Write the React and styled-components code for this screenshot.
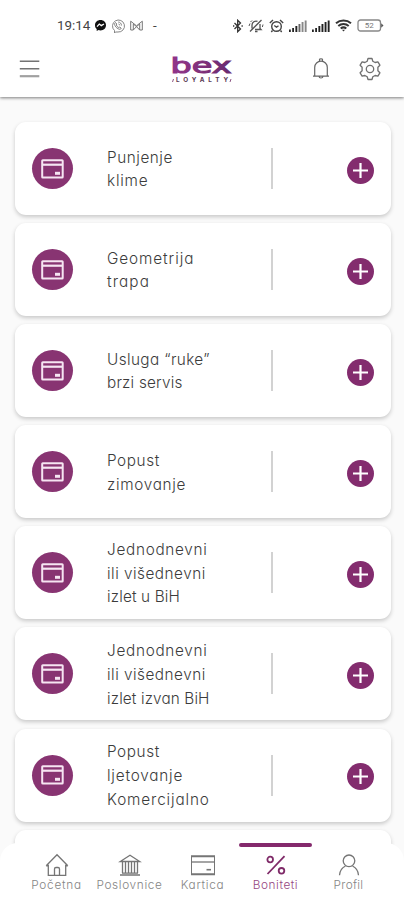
import React from 'react';
import styled, { createGlobalStyle } from 'styled-components';

const GlobalStyle = createGlobalStyle`
  * {
    box-sizing: border-box;
  }

  body {
    margin: 0;
    background: #fafafa;
    font-family: Inter, 'Open Sans', sans-serif;
    font-feature-settings: 'cv11';
  }
`;

const Screen = styled.div`
  display: flex;
  flex-direction: column;
  width: 404px;
  height: 900px;
  overflow: hidden;
  background: #fafafa;
`;

const Header = styled.header`
  flex: none;
  height: 97px;
  background: #fff;
  box-shadow: 0 1px 3px rgba(0, 0, 0, 0.5);
  z-index: 1;
`;

const StatusBar = styled.div`
  display: flex;
  align-items: center;
  justify-content: space-between;
  height: 40px;
  padding: 11px 20px 0 57px;
`;

const StatusGroup = styled.div`
  display: flex;
  align-items: center;
  gap: ${props => props.$gap}px;
`;

const Clock = styled.span`
  width: 33px;
  font: 400 13.4px Roboto, sans-serif;
  color: #444;
  white-space: nowrap;
`;

const Dash = styled(Clock)`
  width: 8px;
  margin-left: 5px;
`;

const AppBar = styled.div`
  display: grid;
  grid-template-columns: 22px 1fr 20px 24px;
  align-items: center;
  height: 57px;
  padding: 0 22px 0 19px;

  > :nth-child(2) {
    justify-self: start;
    margin-left: 130px;
  }

  > :nth-child(3) {
    margin-left: -26.5px;
  }
`;

const List = styled.main`
  flex: 1;
  min-height: 0;
  overflow: hidden;
  display: flex;
  flex-direction: column;
  gap: 8.1px;
  padding: 25px 13px 0 15px;
`;

const Card = styled.article`
  flex: none;
  display: grid;
  grid-template-columns: 92px 164px 1fr 28px;
  align-items: center;
  height: 93px;
  padding: 0 16px 0 0;
  border-radius: 11px;
  background: #fff;
  box-shadow: 0 2px 4px rgba(0, 0, 0, 0.2);
`;

const Badge = styled.div`
  display: flex;
  align-items: center;
  justify-content: center;
  width: 41px;
  height: 41px;
  margin-left: 16.5px;
  border-radius: 50%;
  background: #883472;
`;

const Title = styled.div`
  padding-top: 1.5px;
  font-size: 15.3px;
  font-weight: 300;
  line-height: 23.7px;
  color: #3c3c3c;
  white-space: nowrap;
`;

const Line = styled.div`
  letter-spacing: ${props => props.$spacing}px;
`;

const Divider = styled.div`
  width: 1.5px;
  height: 41px;
  background: #d2d2d2;
`;

const PlusButton = styled.button`
  display: flex;
  align-items: center;
  justify-content: center;
  width: 27px;
  height: 27px;
  margin-top: 3px;
  padding: 0;
  border: 0;
  border-radius: 50%;
  background: #832c6e;
`;

const TabBar = styled.nav`
  flex: none;
  display: grid;
  grid-template-columns: 73px 73px 73px 73px 73px;
  height: 57px;
  padding-left: 20px;
  margin-top: -16px;
  border-radius: 18px 18px 0 0;
  background: #fff;
  z-index: 1;
`;

const Tab = styled.div`
  display: flex;
  flex-direction: column;
  align-items: center;
  color: ${props => (props.$active ? '#96467f' : '#858585')};

  &::before {
    content: '';
    width: 73px;
    height: 3.5px;
    margin-bottom: 6.5px;
    border-radius: 2px;
    background: ${props => (props.$active ? '#84296c' : 'transparent')};
  }
`;

const TabLabel = styled.span`
  font-size: 11.8px;
  line-height: 16px;
  font-weight: 300;
  letter-spacing: ${props => props.$spacing}px;
  white-space: nowrap;
`;

/* status bar icons */

const Messenger = () => (
  <svg width="11" height="11" viewBox="0 0 11 11">
    <path d="M5.5 0C2.3 0 0 2.2 0 5.2c0 1.600.6 2.900 1.700 3.800V11l1.800-.9c.6.2 1.300.3 2 .3C8.700 10.400 11 8.200 11 5.200S8.700 0 5.500 0z" fill="#111" />
    <path d="M2 6.600l2.300-2.500 2 1.500L9 4" fill="none" stroke="#fff" strokeWidth="1.300" />
  </svg>
);

const Viber = () => (
  <svg width="14" height="14" viewBox="0 0 14 14" fill="none" stroke="#777" strokeWidth="0.9">
    <path d="M3.500 11.500A6 6 0 1 1 7 13H4.800L3.500 14z" />
    <path d="M4.500 3.500L5.800 5l-.5 1c.5 1.200 1.200 2 2.500 2.600l1-.6 1.400 1.200c-.5 1.500-1.700 1.300-3 .6-2-1-3.300-2.600-3.600-4.500 0-.8.300-1.400.9-1.800zM7.200 3c2 .2 3.200 1.500 3.300 3.500M7.500 5c.9.1 1.200.6 1.300 1.400" />
  </svg>
);

const Mail = () => (
  <svg width="13" height="11" viewBox="0 0 13 11" fill="none" stroke="#777" strokeWidth="1">
    <path d="M.7 10V1.200l5.800 4.600 5.800-4.600V10H9.700V4L6.500 6.600 3.300 4v6zM3.300 10l3.200-3.400L9.700 10" />
  </svg>
);

const Bluetooth = () => (
  <svg width="10" height="14" viewBox="0 0 10 14" fill="none" stroke="#333" strokeWidth="1.300">
    <path d="M1.500 4l6 6L4.700 12.700V1.300L7.500 4l-6 6" />
    <path d="M0 7h1.300M8.500 7h1.300" />
  </svg>
);

const MutedBell = () => (
  <svg width="16" height="14" viewBox="0 0 16 14" fill="none" stroke="#555" strokeWidth="1.300">
    <path d="M2 12.500L13.500 1M4 9.500V6a4 4 0 0 1 5.500-3.600M12 5v4.500l1 1H7M7 12.500h2.500" />
    <path d="M1 7l1-2.500M15 5.500l-.6 2.500M2.500 3L4 1.500" strokeWidth="1" />
  </svg>
);

const Alarm = () => (
  <svg width="15" height="14" viewBox="0 0 15 14" fill="none" stroke="#444" strokeWidth="1.400">
    <circle cx="7.500" cy="7.500" r="4.800" />
    <path d="M.8 4L4 1M14.200 4L11 1M3.500 11.500L2.300 13M11.500 11.500l1.200 1.500M5.300 6.500l2.200 1.700 2-1.500" />
  </svg>
);

const Signal = ({ faded }) => (
  <svg width="18" height="12" viewBox="0 0 18 12" fill="#222">
    <rect x="0" y="9.500" width="1.800" height="2.500" />
    <rect x="3.200" y="8" width="1.800" height="4" />
    <rect x="6.400" y="6" width="1.900" height="6" />
    <rect x="9.500" y="4" width="1.900" height="8" fill={faded ? '#666' : '#222'} />
    <rect x="12.600" y="2" width="1.900" height="10" fill={faded ? '#888' : '#222'} />
    <rect x="15.700" y="0.500" width="1.900" height="11.500" fill={faded ? '#888' : '#222'} />
  </svg>
);

const Wifi = () => (
  <svg width="17" height="13" viewBox="0 0 17 13" fill="none" stroke="#333" strokeWidth="2">
    <path d="M1 4.300c4.200-3.600 10.800-3.600 15 0M3.300 7c3-2.600 7.400-2.600 10.400 0M5.700 9.500c1.600-1.300 4-1.300 5.600 0" />
    <path d="M7 10.800h3l-1.500 1.700z" fill="#333" stroke="none" />
  </svg>
);

const Battery = () => (
  <svg width="27" height="13" viewBox="0 0 27 13">
    <rect x="1" y="1" width="22.500" height="11" rx="2.500" fill="#fff" stroke="#888" strokeWidth="1.300" />
    <path d="M24.200 4.200l2.300 2.300-2.300 2.300z" fill="#555" />
    <text x="12.200" y="9.400" fontSize="8" textAnchor="middle" fill="#777" fontFamily="Roboto, sans-serif">52</text>
  </svg>
);

/* app bar icons */

const Menu = () => (
  <svg width="22" height="20" viewBox="0 0 22 20">
    <path d="M.8 2.200h19.500M.8 9.700h19.500" stroke="#737373" strokeWidth="1.600" />
    <path d="M.8 17.200h19.500" stroke="#a0a0a0" strokeWidth="2.200" />
  </svg>
);

const Logo = () => (
  <svg width="62" height="36" viewBox="0 0 62 36">
    <defs>
      <linearGradient id="bex" x1="0" y1="0" x2="1" y2="0">
        <stop offset="0" stopColor="#92358b" />
        <stop offset="0.5" stopColor="#80307a" />
        <stop offset="1" stopColor="#682a70" />
      </linearGradient>
    </defs>
    <text x="-0.500" y="22" fontFamily="'DejaVu Sans', sans-serif" fontSize="21.500" textLength="61" lengthAdjust="spacingAndGlyphs" fill="url(#bex)" stroke="url(#bex)" strokeWidth="1.100">bex</text>
    <text x="5" y="31.300" fontFamily="Inter, sans-serif" fontWeight="700" fontSize="6.300" textLength="52" fill="#5a3853">LOYALTY</text>
    <path d="M1.500 31l1-3M59 31l1-3" stroke="#8d5583" strokeWidth="1" />
  </svg>
);

const Bell = () => (
  <svg width="18" height="22" viewBox="0 0 18 22" fill="none" stroke="#666" strokeWidth="1.200">
    <path d="M1 18.200h16M2.700 18V9.500a6.300 6.300 0 0 1 12.600 0V18M7.500 3V1.500c0-.8 3-.8 3 0V3M7 18.500c.3 2 3.700 2 4 0" />
  </svg>
);

const Gear = () => (
  <svg width="24" height="24" viewBox="0 0 24 24" fill="none" stroke="#707070" strokeWidth="1.300" strokeLinejoin="round">
    <path d="M9.200 4.200L10 1.500h4l.8 2.700 2.300 1.300 2.800-.7 2 3.400-2 2v3.600l2 2-2 3.400-2.800-.7-2.300 1.300-.8 2.700h-4l-.8-2.700-2.300-1.300-2.800.7-2-3.400 2-2v-3.600l-2-2 2-3.400 2.800.7z" />
    <circle cx="12" cy="12" r="3.700" />
  </svg>
);

/* card icons */

const CardIcon = () => (
  <svg width="23" height="20" viewBox="0 0 23 20" fill="none" stroke="#f6e5f2">
    <rect x="1.200" y="1.200" width="20.500" height="17.300" rx="0.600" strokeWidth="2" />
    <path d="M1 5.700h21" strokeWidth="2.200" />
    <path d="M14 14.300h5" strokeWidth="3" />
  </svg>
);

const Plus = () => (
  <svg width="15" height="15" viewBox="0 0 15 15">
    <path d="M7.500 0v15M0 7.500h15" stroke="#fff" strokeWidth="2.200" />
  </svg>
);

/* tab icons */

const TabSvg = styled.svg`
  width: 24px;
  height: 24px;
  fill: none;
  stroke: ${props => (props.$active ? '#7f2a68' : '#757575')};
  stroke-width: ${props => (props.$active ? 1.8 : 1.3)};
`;

const Home = () => (
  <TabSvg viewBox="0 0 24 24">
    <path d="M1.200 12.800L12 1.800l10.800 11M3.300 11.800v10.500h17.400V11.800M1.200 12.800h2.100M22.800 12.800h-2.100M9.500 22v-6c0-1 .5-1.500 1.500-1.500h2c1 0 1.500.5 1.500 1.500v6" />
  </TabSvg>
);

const Bank = () => (
  <TabSvg viewBox="0 0 24 24">
    <path d="M2.300 8.500L12 2.300l9.700 6.200zM2 22h20M4 20.200h16M4.500 8.500V20M7.500 8.500V20M10.500 8.500V20M13.500 8.500V20M16.500 8.500V20M19.500 8.500V20" />
  </TabSvg>
);

const Wallet = () => (
  <TabSvg viewBox="0 0 24 24">
    <path d="M0 3.300h24v18H0z" strokeWidth="2" />
    <path d="M0 9h24" />
    <path d="M15.500 16.700h4.500" strokeWidth="1.600" />
  </TabSvg>
);

const Percent = () => (
  <TabSvg viewBox="0 0 24 24" $active>
    <path d="M20.500 3.200L3.500 21" />
    <circle cx="6.200" cy="6.500" r="2.800" />
    <circle cx="17.500" cy="17.800" r="2.800" />
  </TabSvg>
);

const Person = () => (
  <TabSvg viewBox="0 0 24 24">
    <circle cx="12" cy="7.800" r="5.800" />
    <path d="M2.500 22.300c.3-4.500 2.500-7.700 6-9.300M21.500 22.300c-.3-4.500-2.500-7.700-6-9.300" />
  </TabSvg>
);

// every line is [text, letter-spacing]
const benefits = [
  [['Punjenje', 0.55], ['klime', 0.8]],
  [['Geometrija', 0.92], ['trapa', 1.1]],
  [['Usluga “ruke”', 0.4], ['brzi servis', 0.2]],
  [['Popust', 0.6], ['zimovanje', 0.7]],
  [['Jednodnevni', 0.72], ['ili višednevni', 0.5], ['izlet u BiH', 0.15]],
  [['Jednodnevni', 0.72], ['ili višednevni', 0.5], ['izlet izvan BiH', 0.13]],
  [['Popust', 0.6], ['ljetovanje', 0.8], ['Komercijalno', 0.87]],
];

const tabs = [
  { label: 'Početna', icon: Home, spacing: 0.75 },
  { label: 'Poslovnice', icon: Bank, spacing: 0.65 },
  { label: 'Kartica', icon: Wallet, spacing: 0.7 },
  { label: 'Boniteti', icon: Percent, spacing: 0.55, active: true },
  { label: 'Profil', icon: Person, spacing: 0.3 },
];

const Benefit = ({ lines }) => (
  <Card>
    <Badge><CardIcon /></Badge>
    <Title>
      {lines.map(([text, spacing]) => (
        <Line key={text} $spacing={spacing}>{text}</Line>
      ))}
    </Title>
    <Divider />
    <PlusButton><Plus /></PlusButton>
  </Card>
);

const App = () => (
  <Screen>
    <GlobalStyle />
    <Header>
      <StatusBar>
        <StatusGroup $gap={5}>
          <Clock>19:14</Clock>
          <Messenger />
          <Viber />
          <Mail />
          <Dash>-</Dash>
        </StatusGroup>
        <StatusGroup $gap={5}>
          <Bluetooth />
          <MutedBell />
          <Alarm />
          <Signal faded />
          <Signal />
          <Wifi />
          <Battery />
        </StatusGroup>
      </StatusBar>
      <AppBar>
        <Menu />
        <Logo />
        <Bell />
        <Gear />
      </AppBar>
    </Header>
    <List>
      {benefits.map((lines, i) => <Benefit key={i} lines={lines} />)}
      <Card />
    </List>
    <TabBar>
      {tabs.map(({ label, icon: Icon, spacing, active }) => (
        <Tab key={label} $active={active}>
          <Icon />
          <TabLabel $spacing={spacing}>{label}</TabLabel>
        </Tab>
      ))}
    </TabBar>
  </Screen>
);

export default App;
